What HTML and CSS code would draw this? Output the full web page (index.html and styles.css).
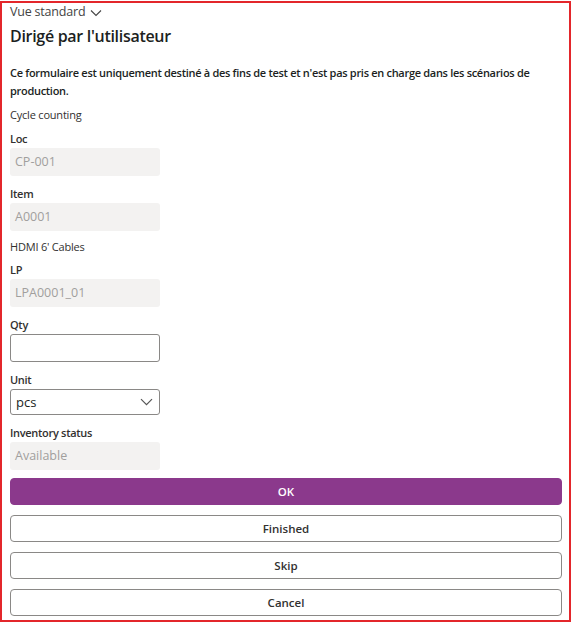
FILE: index.html
```html
<!DOCTYPE html>
<html lang="fr">
<head>
<meta charset="utf-8">
<link rel="stylesheet" href="styles.css">
</head>
<body>
<div class="frame">
  <div class="view">Vue standard
    <svg class="view-chev" width="12" height="8" viewBox="0 0 12 8"><path d="M1 1.5 L6 6.5 L11 1.5" fill="none" stroke="#444" stroke-width="1.1"/></svg>
  </div>
  <h1 class="title">Dirigé par l'utilisateur</h1>
  <p class="notice">Ce formulaire est uniquement destiné à des fins de test et n'est pas pris en charge dans les scénarios de production.</p>
  <div class="info">Cycle counting</div>

  <div class="field field-first">
    <div class="label">Loc</div>
    <div class="input disabled">CP-001</div>
  </div>
  <div class="field">
    <div class="label">Item</div>
    <div class="input disabled">A0001</div>
  </div>
  <div class="info info-mid">HDMI 6' Cables</div>
  <div class="field field-after-info">
    <div class="label">LP</div>
    <div class="input disabled">LPA0001_01</div>
  </div>
  <div class="field">
    <div class="label">Qty</div>
    <div class="input editable"></div>
  </div>
  <div class="field">
    <div class="label">Unit</div>
    <div class="input select"><span>pcs</span>
      <svg width="13" height="8" viewBox="0 0 13 8"><path d="M1 1.2 L6.5 6.7 L12 1.2" fill="none" stroke="#555" stroke-width="1.2"/></svg>
    </div>
  </div>
  <div class="field">
    <div class="label">Inventory status</div>
    <div class="input disabled">Available</div>
  </div>

  <div class="actions">
    <button class="btn primary">OK</button>
    <button class="btn">Finished</button>
    <button class="btn">Skip</button>
    <button class="btn">Cancel</button>
  </div>
</div>
</body>
</html>
```

FILE: styles.css
```css
html, body {
  margin: 0;
  padding: 0;
  background: #ffffff;
}
body {
  font-family: "Open Sans", "Noto Sans", sans-serif;
  color: #323130;
}
.frame {
  margin-top: 1px;
  border: 2px solid #e3262b;
  padding: 0 0 0 8px;
  box-sizing: border-box;
  width: 571px;
  height: 621px;
}
.view {
  font-size: 12.5px;
  letter-spacing: -0.2px;
  line-height: 18px;
  color: #444;
  display: flex;
  align-items: center;
  gap: 5px;
}
.view-chev { margin-top: 1px; }
.title {
  margin: 3px 0 0;
  font-size: 16px;
  letter-spacing: -0.3px;
  line-height: 24px;
  font-weight: 600;
  color: #201f1e;
}
.notice {
  margin: 16px 0 0;
  font-size: 11px;
  letter-spacing: -0.3px;
  line-height: 18px;
  font-weight: 600;
  color: #201f1e;
}
.info {
  font-size: 11px;
  letter-spacing: -0.2px;
  line-height: 18px;
  color: #323130;
  margin-top: 6px;
}
.info-mid { margin-top: 7px; }
.field {
  margin-top: 9px;
  width: 150px;
}
.field-first { margin-top: 6px; }
.field-after-info { margin-top: 5px; }
.label {
  font-size: 11px;
  letter-spacing: -0.3px;
  line-height: 18px;
  font-weight: 600;
  color: #323130;
}
.input {
  height: 28px;
  box-sizing: border-box;
  border-radius: 3px;
  font-size: 12.5px;
  line-height: 28px;
  padding: 0 5px;
}
.disabled {
  background: #f3f2f1;
  color: #a19f9d;
}
.editable {
  border: 1px solid #8a8886;
}
.select {
  border: 1px solid #8a8886;
  height: 26px;
  color: #201f1e;
  font-size: 13px;
  display: flex;
  justify-content: space-between;
  align-items: center;
  padding: 0 6px 0 5px;
}
.actions {
  margin-top: 8px;
  display: flex;
  flex-direction: column;
  gap: 10px;
  width: 552px;
}
.btn {
  height: 27px;
  border: 1px solid #8a8886;
  border-radius: 4px;
  background: #ffffff;
  font-family: inherit;
  font-size: 11.5px;
  font-weight: 600;
  color: #323130;
  padding: 0;
}
.btn.primary {
  background: #8b398c;
  border-color: #8b398c;
  color: #ffffff;
}
```
